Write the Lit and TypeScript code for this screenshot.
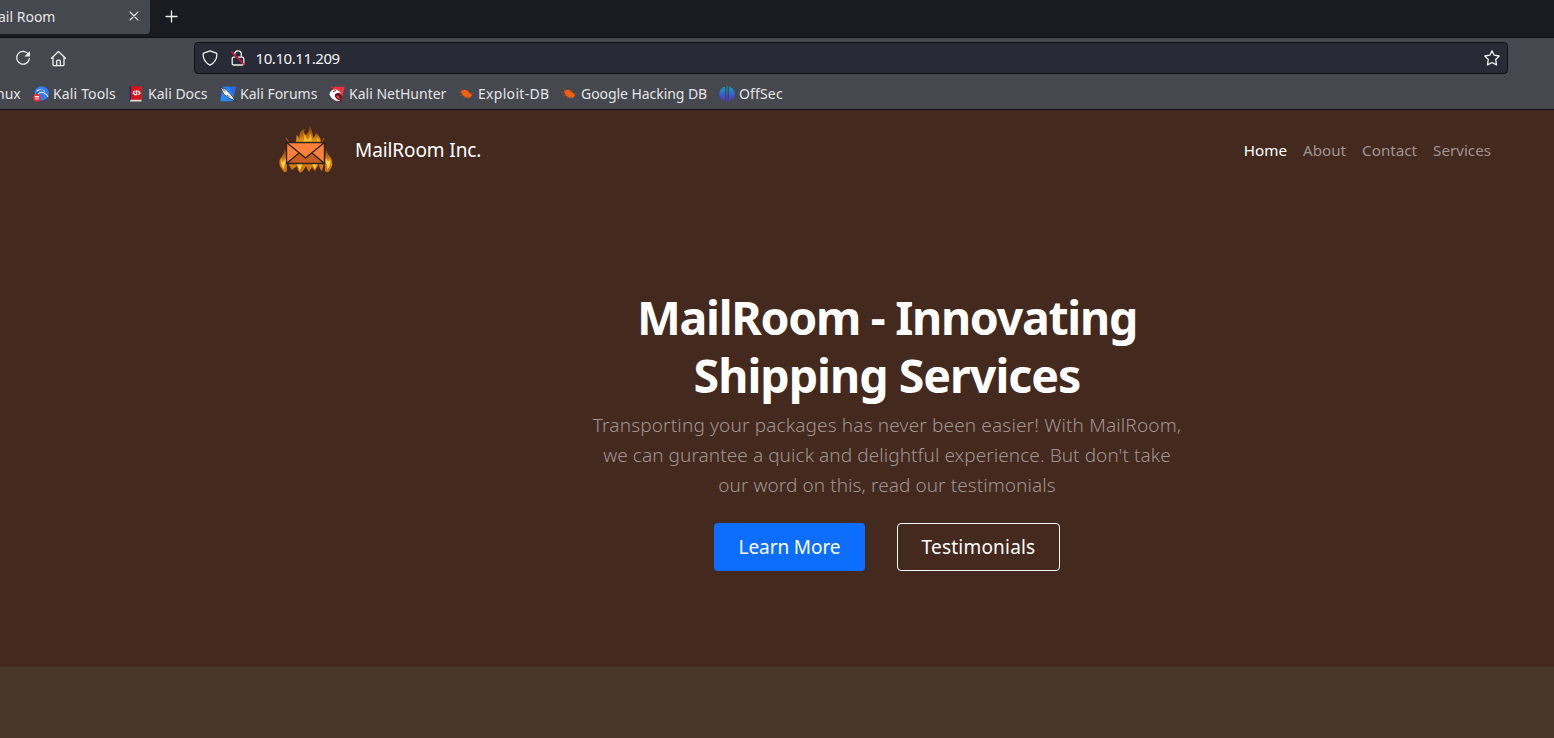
import { LitElement, html, css, svg } from "lit";
import { customElement } from "lit/decorators.js";

const icons: Record<string, unknown> = {
  tools: svg`<circle cx="8.7" cy="7.400" r="7.200" fill="#2f7cf6"/><path d="M3.500 5.200Q8 2.400 12 5.400M5 7.800Q9 4.300 12.200 7.800Q14.200 8.400 15 11" fill="none" stroke="#d8e8ff" stroke-width="1.100"/><path d="M3 7.600L8 4.200L11 5.300" fill="none" stroke="#174a9c" stroke-width=".8"/><circle cx="4" cy="11.700" r="3.900" fill="#e8323a"/><path d="M1.800 10.500h4.400M3.100 10.500v3.200M5 10.500v3.200" stroke="#fff" stroke-width=".9"/>`,
  docs: svg`<path d="M1.500 .3h3v13.400l-3 1.200z" fill="#0d3276"/><path d="M3 .3h10.500v13.600H3z" fill="#dd1018"/><path d="M2.500 13.700h11v1.900H2z" fill="#e9d9d6"/><path d="M13.500 .5v13" stroke="#8f4434" stroke-width=".8"/><path d="M6.800 4.800L5.200 6.900L7 8.700H9M10.200 8.900L12 7L10.200 5H8.200L8.800 8.800" fill="none" stroke="#fff" stroke-width="1.200"/>`,
  forums: svg`<path d="M2.500 .8h13.200l-3 14.400H.4z" fill="#2688ff"/><path d="M9 .8h6.700l-2 9.200z" fill="#2b65ef"/><path d="M.3 1.200L5.700 3.200L10.600 8.200L15.500 14.800L9.300 12.300L4 8.400Z" fill="#f7f7f7" stroke="#171a22" stroke-width=".7"/><path d="M2 2.400L5.500 5.800M7 9l2.700 2" stroke="#303640" stroke-width=".8"/>`,
  hunter: svg`<path d="M2 .8h13.600l-3 14.400H6z" fill="#ee323a"/><path d="M12.700 14.300Q8.200 14.800 6.300 11.300Q5.500 8.600 8.500 8.100Q10.700 8.200 12.800 12.400" fill="none" stroke="#5b1826" stroke-width="2.400"/><path d="M.5 8.800Q.4 3.700 6.100 3.400Q9.500 3.400 12.700 8Q10 6 7.200 7.400Q4.400 8.800 7.200 12.400L11.500 14.900Q5.500 15.500 2.200 11.500Z" fill="#fff"/><path d="M1 4.200L4.500 1.400M4 5.800l3-1.400" stroke="#272831" stroke-width=".9"/>`,
  bug: svg`<path d="M3 5.200Q6 2.400 9.500 4.700L14 8.900Q12.500 13 7.200 11.200Q3.800 9.300 3 5.200Z" fill="#f5600c"/><path d="M.4 6.100L4.400 7.100M1.800 9.700L5.200 8.900M5.700 12.400L7.500 10M11.200 13.200l-1-2.600M12.400 8L15.600 7.200M9 5.500l1.300-2M2.300 2.300l2.300 3.200" stroke="#a64f2b" stroke-width=".7"/>`,
  offsec: svg`<defs><linearGradient id="os" x1="0" y1="0" x2="0" y2="16" gradientUnits="userSpaceOnUse"><stop stop-color="#10a5ad"/><stop offset=".5" stop-color="#2e67d7"/><stop offset="1" stop-color="#6327c9"/></linearGradient></defs><path d="M5.900 .6v14.700Q.3 12.700 .3 7.800T5.900 .6zM10.100 .6v14.700q5.600-2.600 5.600-7.500T10.100 .6z" fill="url(#os)"/><path d="M7.400 .2h1.200v15.600H7.400z" fill="url(#os)"/>`,
};

const bookmarks = [
  { name: "Kali Tools", icon: "tools", cls: "b1" },
  { name: "Kali Docs", icon: "docs", cls: "b2" },
  { name: "Kali Forums", icon: "forums", cls: "b3" },
  { name: "Kali NetHunter", icon: "hunter", cls: "b4" },
  { name: "Exploit-DB", icon: "bug", cls: "b5" },
  { name: "Google Hacking DB", icon: "bug", cls: "b6" },
  { name: "OffSec", icon: "offsec", cls: "b7" },
];

@customElement("app-root")
export class AppRoot extends LitElement {
  static styles = css`
    :host { display: flex; flex-direction: column; height: 738px; overflow: hidden; font-family: "Noto Sans", sans-serif; background: #43291e; color: #fff; }
    * { box-sizing: border-box; }
    svg { display: block; flex: none; }
    a { color: inherit; text-decoration: none; white-space: nowrap; }
    .line { fill: none; stroke: #f0f0f1; stroke-width: 1.3; stroke-linecap: round; stroke-linejoin: round; }
    .thin { stroke-width: 1.1; }
    .tabs { height: 38px; flex: none; background: #1a1b20; border-bottom: 1px solid #0e0f12; display: flex; align-items: flex-start; }
    .tab { width: 150px; height: 34px; background: #45484e; border-radius: 0 0 4px 0; display: flex; align-items: center; justify-content: space-between; padding: 0 10px 2px 0; font-size: 14px; color: #e6e6e8; }
    .title { white-space: nowrap; margin-left: -2px; }
    .add { margin: 10px 0 0 15px; }
    .tools { height: 40px; flex: none; background: #45484e; display: flex; align-items: center; padding-left: 15px; }
    .home { margin-left: 19px; }
    .url { margin-left: 127px; width: 1314px; height: 32px; background: #282a35; border: 1px solid #0e0f13; border-radius: 4px; display: flex; align-items: center; padding: 0 7px; font-size: 15px; color: #f6f6f7; }
    .lock { margin-left: 12px; }
    .address { margin-left: 9.500px; flex: 1; letter-spacing: -0.42px; }
    .marks { height: 32px; flex: none; background: #45484e; border-bottom: 1px solid #0e0f12; display: flex; align-items: center; font-size: 14px; color: #e4e4e6; }
    .cut { width: 37px; margin-left: -4px; white-space: nowrap; }
    .mark { display: flex; align-items: center; gap: 4px; flex: none; white-space: nowrap; }
    .b1 { width: 95px; letter-spacing: 0.15px; }
    .b2 { width: 92px; }
    .b3 { width: 109px; }
    .b4 { width: 129px; }
    .b5 { width: 103px; letter-spacing: 0.3px; }
    .b6 { width: 158px; letter-spacing: -0.06px; }
    .b7 { letter-spacing: 0.15px; }
    .page { height: 557px; flex: none; display: flex; flex-direction: column; }
    .nav { height: 80px; display: flex; align-items: center; padding: 0 63px 0 278px; }
    .brand { display: flex; align-items: center; gap: 21px; font-size: 19px; letter-spacing: -0.1px; flex: 1; }
    .links { display: flex; gap: 16px; font-size: 15.2px; color: #a1948e; }
    .on { color: #fff; }
    .hero { width: 600px; margin: 98px 0 0 587px; text-align: center; }
    h1 { margin: 0 0 6px; font-size: 46.500px; line-height: 58px; font-weight: 700; white-space: nowrap; }
    .row { display: block; }
    .h1a { letter-spacing: -1.300px; }
    .h1b { letter-spacing: -1px; }
    .lead { margin: 0; font-size: 19px; line-height: 30px; font-weight: 300; color: #a1948e; white-space: nowrap; }
    .l1 { letter-spacing: 0.15px; }
    .l2 { letter-spacing: 0.07px; }
    .l3 { letter-spacing: 0.07px; }
    .actions { display: flex; justify-content: center; gap: 32px; margin-top: 23px; }
    .btn { height: 48px; border-radius: 4px; display: flex; align-items: center; justify-content: center; font-size: 19px; }
    .primary { width: 151px; background: #0d6efd; letter-spacing: -0.1px; }
    .ghost { width: 163px; border: 1px solid #f8f9fa; letter-spacing: 0.2px; }
    .band { flex: 1; background: #49382a; }
  `;

  render() {
    return html`
      <div class="tabs">
        <div class="tab"><span class="title">ail Room</span>
          <svg width="12" height="12" viewBox="0 0 12 12"><path class="line thin" d="M2 2l8 8M10 2l-8 8"/></svg>
        </div>
        <svg class="add" width="13" height="13" viewBox="0 0 13 13"><path class="line" d="M6.500 1v11M1 6.500h11"/></svg>
      </div>
      <div class="tools">
        <svg width="16" height="16" viewBox="0 0 16 16"><path class="line" d="M13.400 4.200A6.400 6.400 0 1 0 14.400 8.600"/><path d="M15 1v5.600H9.400z" fill="#f0f0f1"/></svg>
        <svg class="home" width="17" height="17" viewBox="0 0 17 17"><path class="line" d="M1.500 8.300L8.500 1.500L15.500 8.300M3 7.200v7.600q0 .8 .8 .8h9.400q.8 0 .8-.8V7.200M6.700 15.400v-4.200q0-1 1-1h1.600q1 0 1 1v4.200"/></svg>
        <div class="url">
          <svg width="16" height="16" viewBox="0 0 16 16"><path class="line" d="M8 .8L14.300 3.200Q15 3.500 14.900 4.300Q14.800 11.700 8 15.200Q1.200 11.700 1.100 4.300Q1 3.500 1.700 3.200Z"/></svg>
          <svg class="lock" width="16" height="16" viewBox="0 0 16 16"><path class="line" d="M4.700 4.200a3.300 3.300 0 0 1 6.600 0v2.800M8.300 7.200h4q1.500 0 1.500 1.500v4.800q0 1.500-1.500 1.500H3.700q-1.500 0-1.500-1.500V8.700q0-1.500 1.500-1.500h1"/><path d="M1.300 1.500L14.600 15" stroke="#e0184f" stroke-width="1.400"/></svg>
          <span class="address">10.10.11.209</span>
          <svg width="16" height="16" viewBox="0 0 16 16"><path class="line" d="M8 .9L10.200 5.200L15.200 6L11.700 9.500L12.500 14.900L8 12.500L3.500 14.900L4.300 9.500L.8 6L5.800 5.200Z"/></svg>
        </div>
      </div>
      <div class="marks">
        <span class="cut">nux</span>
        ${bookmarks.map((b) => html`<a class="mark ${b.cls}"><svg width="16" height="16" viewBox="0 0 16 16">${icons[b.icon]}</svg><span>${b.name}</span></a>`)}
      </div>
      <main class="page">
        <nav class="nav">
          <a class="brand">
            <svg width="56" height="50" viewBox="0 0 56 50">
              <defs>
                <linearGradient id="top" x1="0" y1="1" x2="0" y2="18" gradientUnits="userSpaceOnUse"><stop stop-color="#7a3c12"/><stop offset=".55" stop-color="#b8690f"/><stop offset="1" stop-color="#f0a51c"/></linearGradient>
                <linearGradient id="side" x1="0" y1="24" x2="0" y2="47" gradientUnits="userSpaceOnUse"><stop stop-color="#7a3c12"/><stop offset=".5" stop-color="#e5860f"/><stop offset="1" stop-color="#c96a10"/></linearGradient>
              </defs>
              <path d="M17 18Q19 15 18 10Q21 11 22 15Q20 9 24 5L27 4Q25 8 28 10Q32 6 31 0Q35 6 35 13Q37 12 38 8Q43 12 43 18Z" fill="url(#top)"/>
              <path d="M24 18Q28 14 25 8Q29 12 29 15Q33 12 31.500 7Q35 13 33 18M38 18Q40 15 39 12Q42 15 41.500 18" fill="#ffc22e" opacity=".85"/>
              <path d="M7 23Q9 28 9 46Q7 49 4.500 45Q0 40 2 34Q6 30 7 23ZM48 23Q47 30 47 46Q50 49 52 45Q56 40 53 33Q49 29 48 23Z" fill="url(#side)"/>
              <path d="M10 38h36L44 46Q41 44 41 39L37 46Q35 44 34 42L31 47Q29 44 28 41L25 46L22 48Q19 45 19 41L14 45Q12 42 10 38Z" fill="url(#side)"/>
              <path d="M4 34Q2 40 6.500 45Q5.500 40 8 37V33Q4 41 4 34ZM51.500 34Q54 40 49 45Q50 40 47.500 37V33Q51 39 51.500 34ZM19 39L22 46L24 39ZM34 39L37 44L39 39Z" fill="#ffd44a"/>
              <path d="M8 13L11 17.500M46 13L44 17.500" stroke="#a65323" stroke-width="1.200"/>
              <path d="M8.500 17.500h38v21h-38z" fill="#ff8038"/>
              <path d="M8.500 38.500L21 28L27.500 33L34 28L46.500 38.500Z" fill="#c75d20"/>
              <path d="M8.500 17.500L27.500 33L46.500 17.500M8.500 38.500L21 28M46.500 38.500L34 28M8.500 17.500h38v21h-38z" fill="none" stroke="#2b2420" stroke-width="1.400" stroke-linejoin="round"/>
            </svg>
            <span>MailRoom Inc.</span>
          </a>
          <div class="links"><a class="on">Home</a><a>About</a><a>Contact</a><a>Services</a></div>
        </nav>
        <section class="hero">
          <h1><span class="row h1a">MailRoom - Innovating</span><span class="row h1b">Shipping Services</span></h1>
          <p class="lead"><span class="row l1">Transporting your packages has never been easier! With MailRoom,</span><span class="row l2">we can gurantee a quick and delightful experience. But don't take</span><span class="row l3">our word on this, read our testimonials</span></p>
          <div class="actions"><a class="btn primary">Learn More</a><a class="btn ghost">Testimonials</a></div>
        </section>
      </main>
      <div class="band"></div>
    `;
  }
}
